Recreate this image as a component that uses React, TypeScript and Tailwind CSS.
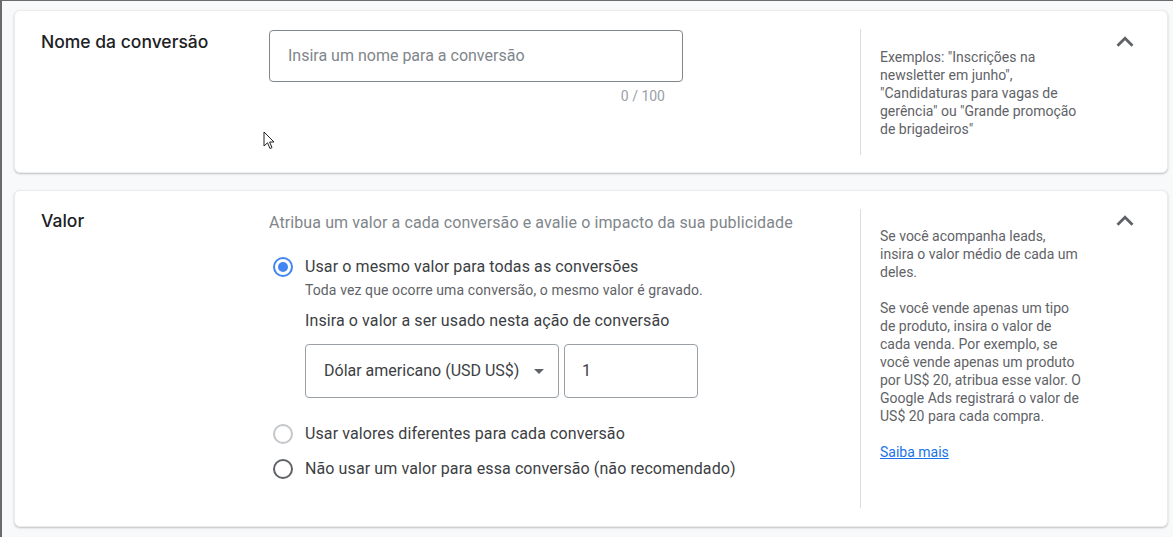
import React from "react";

const Chevron = () => (
  <svg width="34" height="34" viewBox="0 0 24 24" className="block">
    <path d="M7.41 15.41L12 10.83l4.59 4.58L18 14l-6-6-6 6z" fill="#5f6368" />
  </svg>
);

const Radio = ({ state }: { state: "on" | "disabled" | "off" }) => {
  if (state === "on")
    return (
      <span className="flex h-[20px] w-[20px] shrink-0 items-center justify-center rounded-full border-2 border-[#4285f4]">
        <span className="h-[10px] w-[10px] rounded-full bg-[#4285f4]" />
      </span>
    );
  return (
    <span
      className={
        state === "disabled"
          ? "h-[20px] w-[20px] shrink-0 rounded-full border-2 border-[#c4c7ca]"
          : "h-[20px] w-[20px] shrink-0 rounded-full border-2 border-[#5f6368]"
      }
    />
  );
};

const Cursor = () => (
  <svg width="14" height="20" viewBox="0 0 14 20" className="absolute left-[261px] top-[130px]">
    <path d="M1 1 L1 15 L4.5 11.8 L7 17.5 L9 16.6 L6.6 11 L11 11 Z" fill="#fff" stroke="#222" strokeWidth="1" strokeLinejoin="round" />
  </svg>
);

const titleFont = { fontFamily: "Inter, 'Open Sans', Roboto, sans-serif" };

export default function App() {
  const roboto = { fontFamily: "Roboto, 'Liberation Sans', sans-serif" };
  return (
    <div
      className="relative h-[537px] w-[1173px] overflow-hidden border-l-2 border-t border-[#6b6b6b] bg-[#f8f9fa] pl-[12px] pr-[5px] pt-[9px]"
      style={roboto}
    >
      {/* Card 1 */}
      <div className="flex h-[163px] rounded-[6px] border border-[#ececec] bg-white pb-[17px] pt-[18px] shadow-[0_1px_2px_rgba(60,64,67,0.3)]">
        <div
          className="w-[254px] shrink-0 pl-[26px] pt-[1px] text-[17.5px] font-medium leading-[24px] text-[#202124]"
          style={titleFont}
        >
          Nome da conversão
        </div>
        <div className="w-[591px] shrink-0 pt-[1px]">
          <div className="flex h-[52px] w-[414px] items-center rounded-[4px] border border-[#80868b] pl-[18px] text-[16px] text-[#80868b]">
            Insira um nome para a conversão
          </div>
          <div className="mt-[6px] w-[396px] text-right text-[14px] leading-[16px] text-[#9aa0a6]">0 / 100</div>
        </div>
        <div className="w-[240px] shrink-0 border-l border-[#dadce0] pl-[19px] pt-[19px] text-[14px] leading-[18px] text-[#5f6368]">
          <div className="whitespace-nowrap">Exemplos: "Inscrições na</div>
          <div className="whitespace-nowrap">newsletter em junho",</div>
          <div className="whitespace-nowrap">"Candidaturas para vagas de</div>
          <div className="whitespace-nowrap">gerência" ou "Grande promoção</div>
          <div className="whitespace-nowrap">de brigadeiros"</div>
        </div>
        <div className="-mt-[4px] pl-[8px]">
          <Chevron />
        </div>
      </div>

      {/* Card 2 */}
      <div className="mt-[17px] flex h-[337px] rounded-[6px] border border-[#ececec] bg-white py-[18px] shadow-[0_1px_2px_rgba(60,64,67,0.3)]">
        <div
          className="w-[254px] shrink-0 pl-[26px] pt-[0px] text-[17.5px] font-medium leading-[24px] text-[#202124]"
          style={titleFont}
        >
          Valor
        </div>
        <div className="w-[591px] shrink-0 pt-[2px] tracking-[0.1px]">
          <div className="text-[16px] leading-[24px] text-[#80868b]">
            Atribua um valor a cada conversão e avalie o impacto da sua publicidade
          </div>
          <div className="mt-[12px] flex gap-[12px] pl-[4px]">
            <div className="pt-[10px]">
              <Radio state="on" />
            </div>
            <div>
              <div className="pt-[8px] text-[16px] leading-[24px] text-[#3c4043]">
                Usar o mesmo valor para todas as conversões
              </div>
              <div className="text-[14px] leading-[22px] text-[#5f6368]">
                Toda vez que ocorre uma conversão, o mesmo valor é gravado.
              </div>
              <div className="mt-[8px] text-[16px] leading-[24px] text-[#3c4043]">
                Insira o valor a ser usado nesta ação de conversão
              </div>
              <div className="mt-[11px] flex gap-[5px] tracking-normal">
                <div className="flex h-[54px] w-[254px] items-center rounded-[4px] border border-[#9aa0a6] pl-[18px] text-[16px] text-[#3c4043]">
                  Dólar americano (USD US$)
                  <span className="ml-[15px] h-0 w-0 border-x-[5px] border-t-[5px] border-x-transparent border-t-[#5f6368]" />
                </div>
                <div className="flex h-[54px] w-[134px] items-center rounded-[4px] border border-[#9aa0a6] pl-[17px] text-[16px] text-[#3c4043]">
                  1
                </div>
              </div>
            </div>
          </div>
          <div className="mt-[24px] flex items-center gap-[12px] pl-[4px]">
            <Radio state="disabled" />
            <span className="text-[16px] leading-[24px] text-[#3c4043]">Usar valores diferentes para cada conversão</span>
          </div>
          <div className="mt-[11px] flex items-center gap-[12px] pl-[4px]">
            <Radio state="off" />
            <span className="text-[16px] leading-[24px] text-[#3c4043]">
              Não usar um valor para essa conversão (não recomendado)
            </span>
          </div>
        </div>
        <div className="w-[240px] shrink-0 border-l border-[#dadce0] pl-[19px] pt-[18px] text-[14px] leading-[18px] text-[#5f6368]">
          <div className="whitespace-nowrap">Se você acompanha leads,</div>
          <div className="whitespace-nowrap">insira o valor médio de cada um</div>
          <div className="whitespace-nowrap">deles.</div>
          <div className="h-[18px]" />
          <div className="whitespace-nowrap">Se você vende apenas um tipo</div>
          <div className="whitespace-nowrap">de produto, insira o valor de</div>
          <div className="whitespace-nowrap">cada venda. Por exemplo, se</div>
          <div className="whitespace-nowrap">você vende apenas um produto</div>
          <div className="whitespace-nowrap">por US$ 20, atribua esse valor. O</div>
          <div className="whitespace-nowrap">Google Ads registrará o valor de</div>
          <div className="whitespace-nowrap">US$ 20 para cada compra.</div>
          <div className="h-[18px]" />
          <a className="text-[#1a73e8] underline">Saiba mais</a>
        </div>
        <div className="-mt-[5px] pl-[8px]">
          <Chevron />
        </div>
      </div>
      <Cursor />
    </div>
  );
}
